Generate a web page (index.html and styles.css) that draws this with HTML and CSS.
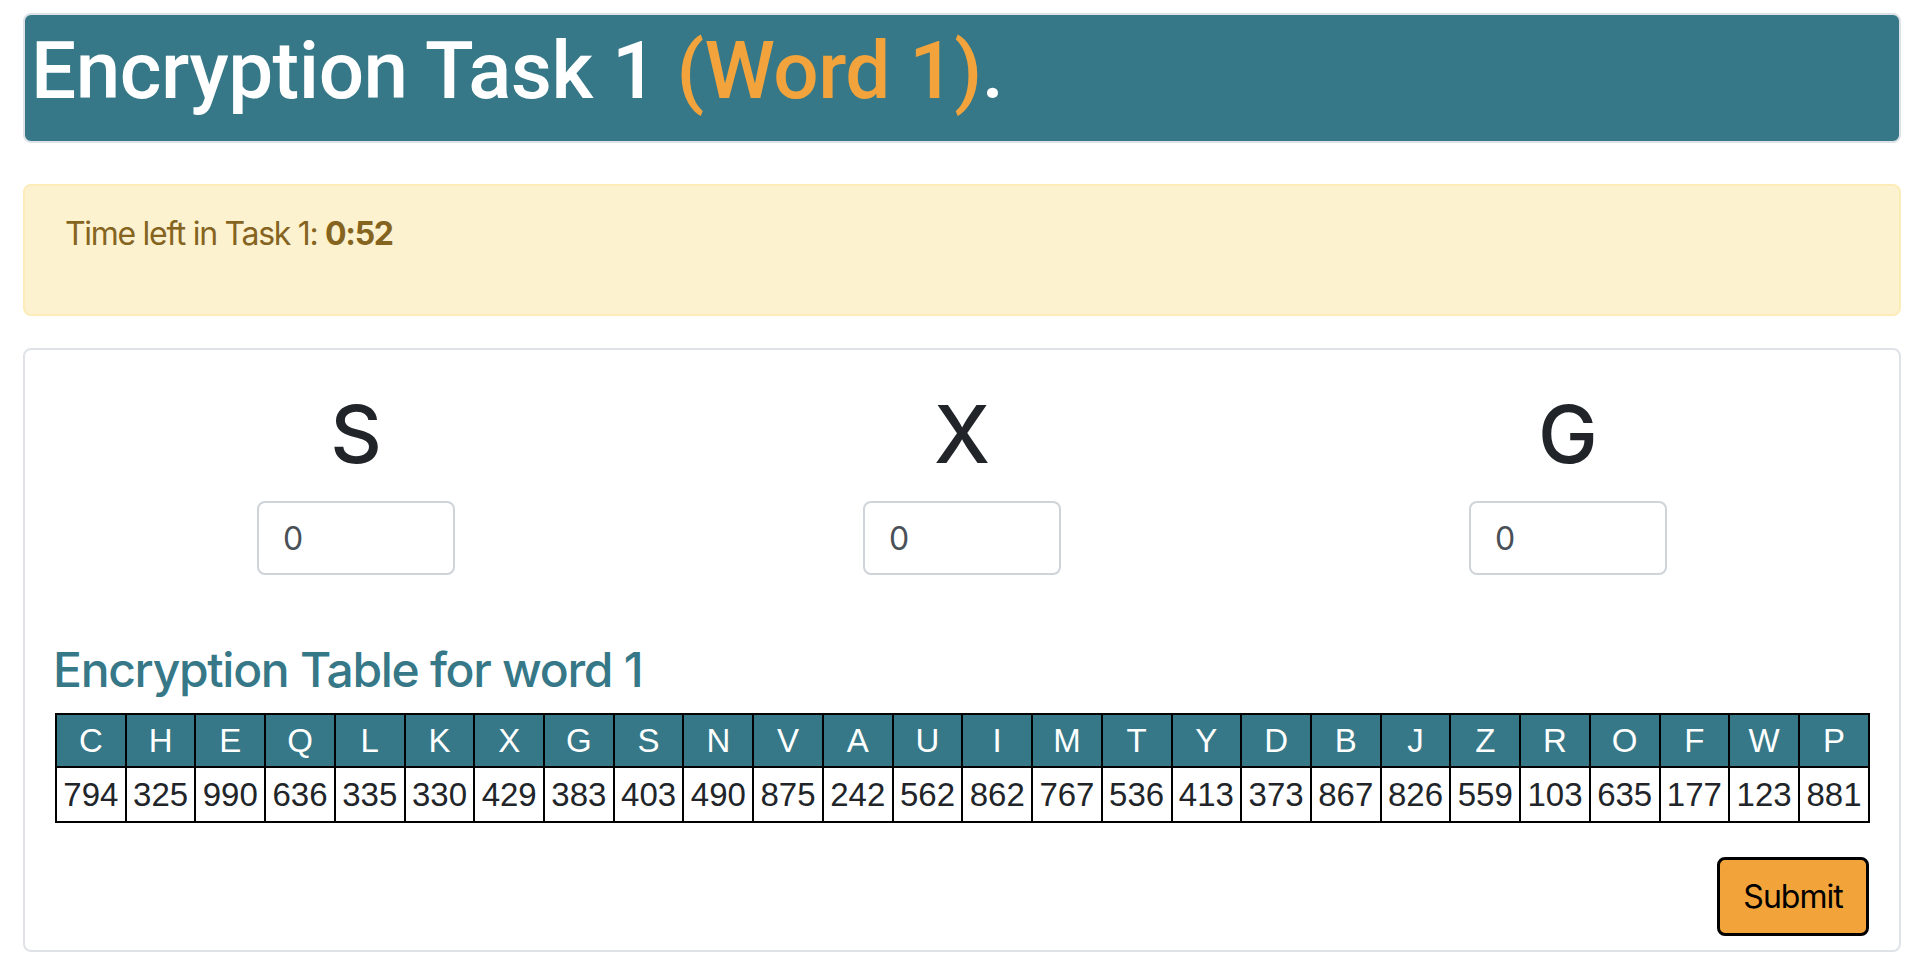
FILE: index.html
```html
<!DOCTYPE html>
<html lang="en">
<head>
<meta charset="utf-8">
<title>Encryption Task 1</title>
<link rel="stylesheet" href="styles.css">
</head>
<body>
<div class="page">
  <header class="title-bar">
    <h1 class="title">Encryption Task 1 <span class="word">(Word 1)</span>.</h1>
  </header>

  <div class="alert">
    <p class="alert-text">Time left in Task 1: <b>0:52</b></p>
  </div>

  <div class="card">
    <div class="letters">
      <div class="letter-col">
        <h2 class="letter">S</h2>
        <input class="letter-input" type="text" value="0">
      </div>
      <div class="letter-col">
        <h2 class="letter">X</h2>
        <input class="letter-input" type="text" value="0">
      </div>
      <div class="letter-col">
        <h2 class="letter">G</h2>
        <input class="letter-input" type="text" value="0">
      </div>
    </div>

    <h4 class="table-title">Encryption Table for word 1</h4>
    <table class="enc-table">
      <thead>
        <tr>
          <th>C</th><th>H</th><th>E</th><th>Q</th><th>L</th><th>K</th><th>X</th><th>G</th><th>S</th><th>N</th><th>V</th><th>A</th><th>U</th><th>I</th><th>M</th><th>T</th><th>Y</th><th>D</th><th>B</th><th>J</th><th>Z</th><th>R</th><th>O</th><th>F</th><th>W</th><th>P</th>
        </tr>
      </thead>
      <tbody>
        <tr>
          <td>794</td><td>325</td><td>990</td><td>636</td><td>335</td><td>330</td><td>429</td><td>383</td><td>403</td><td>490</td><td>875</td><td>242</td><td>562</td><td>862</td><td>767</td><td>536</td><td>413</td><td>373</td><td>867</td><td>826</td><td>559</td><td>103</td><td>635</td><td>177</td><td>123</td><td>881</td>
        </tr>
      </tbody>
    </table>

    <div class="actions">
      <button class="submit" type="button">Submit</button>
    </div>
  </div>
</div>
</body>
</html>
```
FILE: styles.css
```css
* {
  box-sizing: border-box;
}

html, body {
  margin: 0;
  padding: 0;
  background: #ffffff;
}

body {
  font-family: Inter, "Liberation Sans", sans-serif;
  color: #212529;
  font-size: 32px;
  line-height: 1.5;
}

.page {
  margin: 13px 11px 0 23px;
}

.title-bar {
  background: #367887;
  border: 2px solid #dde2e6;
  border-radius: 8px;
  padding: 8px 8px 22px 6px;
  height: 130px;
}

.title {
  margin: 0;
  font-family: Roboto, "Liberation Sans", Arial, sans-serif;
  font-size: 80px;
  line-height: 96px;
  font-weight: 500;
  color: #ffffff;
  letter-spacing: -0.5px;
  white-space: nowrap;
}

.word {
  color: #f3a33b;
}

.alert {
  margin-top: 41px;
  background: #fdf2d0;
  border: 2px solid #fcecb8;
  border-radius: 8px;
  padding: 24px 40px;
  color: #85641f;
}

.alert-text {
  margin: 0 0 32px;
  font-size: 32px;
  line-height: 48px;
  letter-spacing: -1.3px;
}

.alert-text b {
  font-weight: 700;
}

.card {
  margin-top: 32px;
  border: 2px solid #dfe3e7;
  border-radius: 8px;
  padding: 36px 28px 14px;
  height: 604px;
}

.letters {
  display: grid;
  grid-template-columns: repeat(3, 1fr);
  margin-bottom: 66px;
}

.letter-col {
  display: flex;
  flex-direction: column;
  align-items: center;
}

.letter {
  margin: 0 0 19px;
  font-size: 80px;
  line-height: 96px;
  font-weight: 500;
  color: #212529;
}

.letter-input {
  width: 198px;
  height: 74px;
  border: 2px solid #ced4da;
  border-radius: 8px;
  padding: 0 24px;
  font-family: Inter, "Liberation Sans", sans-serif;
  font-size: 32px;
  color: #495057;
  background: #fff;
  outline: none;
}

.table-title {
  margin: 0 0 14px;
  font-size: 48px;
  line-height: 58px;
  font-weight: 500;
  color: #367887;
  letter-spacing: -1.3px;
}

.enc-table {
  border-collapse: collapse;
  width: calc(100% - 3px);
  margin-left: 2px;
  table-layout: fixed;
  font-family: "Liberation Sans", Arial, sans-serif;
  font-size: 33px;
}

.enc-table th,
.enc-table td {
  border: 2px solid #000;
  padding: 0;
  text-align: center;
}

.enc-table th {
  background: #367887;
  color: #ffffff;
  font-weight: 400;
  line-height: 51px;
}

.enc-table td {
  background: #fff;
  color: #212529;
  line-height: 53px;
}

.actions {
  display: flex;
  justify-content: flex-end;
  margin-top: 34px;
  padding-right: 2px;
}

.submit {
  width: 152px;
  height: 79px;
  background: #f2a43b;
  border: 3px solid #000;
  border-radius: 8px;
  font-family: Inter, "Liberation Sans", sans-serif;
  font-size: 32px;
  color: #000;
  padding: 0;
  letter-spacing: -1px;
}
```
